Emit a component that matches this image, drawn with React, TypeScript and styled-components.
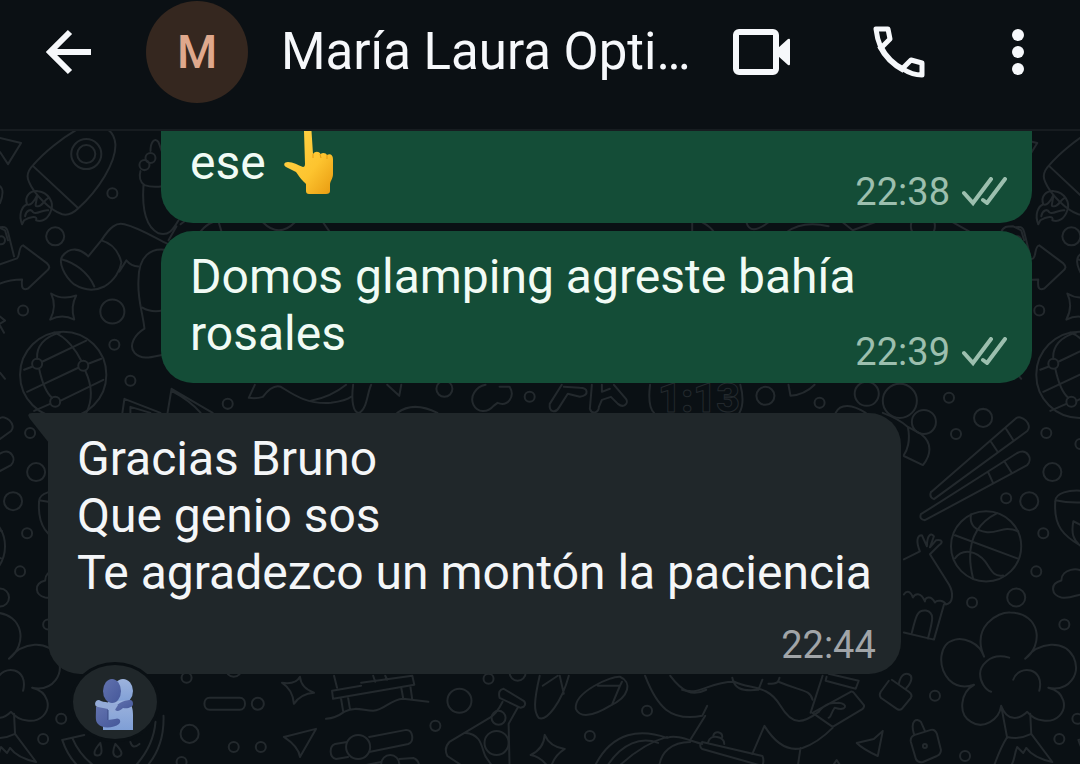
import React from "react";
import styled, { createGlobalStyle } from "styled-components";

const GlobalStyle = createGlobalStyle`
  * { box-sizing: border-box; }
  body {
    margin: 0;
    background: #0a1014;
    font-family: Roboto, "Liberation Sans", sans-serif;
  }
`;

const Screen = styled.div`
  display: flex;
  flex-direction: column;
  min-height: 100vh;
  overflow: hidden;
`;

const Header = styled.header`
  display: flex;
  align-items: center;
  padding: 0 50px 26px 44px;
  height: 131px;
  flex: none;
  background: #0b1014;
  border-bottom: 2px solid #171c20;
`;

const IconButton = styled.button`
  display: flex;
  flex: none;
  padding: 0;
  border: 0;
  background: none;
  color: #f6f8fb;
  cursor: pointer;
`;

const Avatar = styled.div`
  display: flex;
  align-items: center;
  justify-content: center;
  flex: none;
  width: 102px;
  height: 102px;
  margin-left: 54px;
  border-radius: 50%;
  background: #35271f;
  color: #dfa88c;
  font-size: 46px;
  font-weight: 500;
`;

const ContactName = styled.h1`
  flex: 1;
  min-width: 0;
  margin: 0 0 0 33px;
  overflow: hidden;
  white-space: nowrap;
  color: #f6f8fb;
  font-size: 51px;
  font-weight: 400;
  line-height: 60px;
`;

const Actions = styled.div`
  display: flex;
  align-items: center;
  gap: 80px;
`;

const Chat = styled.main`
  display: grid;
  flex: 1;
  grid-template-columns: minmax(0, 1fr);
`;

const Wallpaper = styled.svg`
  grid-area: 1 / 1;
  width: 100%;
  height: 0;
  min-height: 100%;
  fill: none;
  stroke: #23292d;
  stroke-width: 2;
  stroke-linecap: round;
  stroke-linejoin: round;
`;

const Messages = styled.section`
  grid-area: 1 / 1;
  z-index: 1;
  display: flex;
  flex-direction: column;
  align-items: flex-start;
  gap: 8px;
  padding: 0 48px 24px;
`;

const Bubble = styled.article<{ $sent?: boolean; $clipped?: boolean }>`
  position: relative;
  display: grid;
  width: ${(p) => (p.$sent ? "calc(100% - 113px)" : "auto")};
  align-self: ${(p) => (p.$sent ? "flex-end" : "flex-start")};
  margin-top: ${(p) => (p.$sent ? 0 : 22)}px;
  padding: ${(p) => (p.$clipped ? 0 : 17)}px 25px ${(p) => (p.$sent ? 9 : 7)}px 29px;
  border-radius: ${(p) => (p.$clipped ? "0 0 32px 32px" : p.$sent ? "32px" : "0 32px 32px 32px")};
  background: ${(p) => (p.$sent ? "#144d37" : "#20272a")};
  color: ${(p) => (p.$sent ? "#f1fbf5" : "#f4f6f8")};
`;

const MessageText = styled.p<{ $gap: number }>`
  grid-area: 1 / 1;
  display: flow-root;
  margin: 0;
  padding: 0 4px ${(p) => p.$gap}px 0;
  font-size: 48px;
  line-height: 57px;
`;

const EmojiLine = styled(MessageText)`
  display: flex;
  align-items: center;
  gap: 17px;
`;

const Meta = styled.footer<{ $sent?: boolean }>`
  grid-area: 1 / 1;
  display: flex;
  align-items: center;
  align-self: end;
  justify-self: end;
  gap: 12px;
  color: ${(p) => (p.$sent ? "#9cbfae" : "#a1a5a8")};
  font-size: 38px;
  line-height: 44px;
`;

const Tail = styled.svg`
  position: absolute;
  top: 0;
  left: -20px;
  fill: #20272a;
`;

const Reaction = styled.button`
  display: flex;
  align-items: center;
  justify-content: center;
  z-index: 1;
  width: 90px;
  height: 80px;
  margin: -20px 0 0 22px;
  padding: 6px 3px 0 0;
  border: 3px solid #0a1014;
  border-radius: 50%;
  background: #20272a;
  cursor: pointer;
`;

const circles: [number, number, number][] = [
  [86, 154, 15], [86, 154, 9], [112, 193, 5], [55, 236, 9], [23, 310, 5], [112, 311, 12],
  [114, 344, 5], [130, 380, 5], [30, 432, 5], [144, 165, 5], [150, 158, 5], [1, 240, 4],
  [63, 374, 43], [37, 363, 5], [83, 365, 5], [55, 401, 5], [897, 400, 17], [864, 393, 12],
  [921, 421, 12], [946, 397, 5], [980, 417, 9], [953, 433, 5], [1077, 443, 5], [1049, 471, 9],
  [1003, 497, 5], [1026, 500, 9], [1040, 532, 5], [1033, 570, 5], [1013, 596, 9], [969, 601, 5],
  [1061, 623, 5], [932, 694, 5], [1074, 717, 5], [1056, 737, 5], [962, 754, 5], [983, 545, 35],
  [922, 744, 2], [458, 699, 12], [487, 677, 5], [516, 671, 8], [434, 724, 5], [645, 709, 5],
  [588, 734, 5], [357, 745, 12], [389, 762, 9], [497, 716, 7], [495, 741, 12], [257, 702, 6],
  [186, 676, 5], [189, 732, 9], [233, 745, 5], [260, 745, 5], [181, 760, 5], [227, 403, 5],
  [443, 388, 8], [528, 396, 5], [763, 395, 9], [817, 402, 5], [920, 226, 12], [233, 667, 8],
];

const doodles = [
  // rocket
  "M76 130C62 138 44 152 33 165C28 170 26 176 29 182C34 194 50 210 62 214Q70 216 78 208C98 190 116 162 115 144Q114 134 108 130M33 166L78 208",
  "M22 224C18 214 22 206 27 204C24 196 30 190 38 191C48 192 54 202 51 210C48 219 42 222 36 220C38 215 30 216 24 220zM27 204C30 206 34 202 37 195C37 202 33 207 38 206C42 206 44 200 48 198M25 216C26 210 31 208 33 212C37 215 42 209 48 210",
  // hand and sleeve
  "M150 151C150 142 154 137 158 142L162 153M140 171C138 178 140 182 144 185C150 187 156 187 162 186M143 185C141 215 148 228 158 233C168 236 172 230 178 220M168 240L176 226M180 224L184 221",
  // arrow, card, plane
  "M0 264L17 258C20 256 18 246 23 245L47 263C50 266 50 268 46 271L28 288C23 290 21 288 22 279Q10 279 0 283M0 227C6 226 7 228 8 232L14 256M0 138L21 143L8 164L0 152M0 186Q5 190 0 203M0 316L5 320L0 323M0 325L4 332M0 372L5 378",
  // boot and leg
  "M101 240C110 226 116 222 124 224C140 228 155 238 168 244M101 240L88 256C80 248 70 246 62 256C58 262 64 276 74 284C84 290 94 291 104 286C114 280 120 270 121 262C118 250 112 243 101 240M62 259C74 262 88 272 94 286M119 271L126 260C130 265 134 266 138 266",
  "M168 250C150 246 138 256 138 280C137 300 142 310 144 328C134 334 128 345 134 352C142 360 152 356 162 354M142 307Q150 312 162 310",
  // sparkles
  "M51 293Q62 300 76 295Q70 306 74 319Q62 313 50 319Q57 306 51 293z",
  "M299 675Q300 686 313 691Q300 692 293 702Q292 688 281 681Q295 683 299 675z",
  "M543 733Q548 745 563 747Q552 754 549 766M543 733Q542 747 529 753Q540 755 547 766",
  // globe
  "M24 369L32 366M42 361L86 340M27 391L78 367M88 363L101 358M60 400L103 379M50 403L34 410M60 332C44 336 36 346 37 358M39 368C42 382 46 392 52 397M54 332C66 336 76 350 81 360M85 370C92 385 92 400 86 412",
  "M122 412L124 398L160 412M130 412L130 406L150 412M167 412L171 388L212 412M171 390Q190 400 200 412",
  // chopsticks
  "M928 491L1012 418C1018 412 1030 424 1024 430L931 498Q926 496 928 491M988 441L994 450M1003 428L1010 439",
  "M918 513L1014 452C1024 447 1030 458 1024 464L922 519Q916 518 918 513M985 471L990 482M1001 460L1008 471",
  "M880 412Q896 418 905 426C908 440 904 450 901 454M905 426L918 433C930 442 928 454 920 464L901 455",
  // basketball
  "M968 513C966 524 972 529 984 531C996 532 1000 524 1015 530M994 512C970 524 962 545 970 577M952 534L1014 557M952 557C960 546 974 550 982 560C988 568 990 576 1000 574",
  // bowl and cloud
  "M1082 490C1065 488 1052 492 1052 500C1050 525 1060 535 1080 546M1052 499Q1065 502 1082 501M1082 526L1070 520C1068 530 1068 540 1082 548",
  "M1082 594C1076 590 1070 598 1058 596C1048 594 1046 582 1058 579C1058 568 1075 564 1082 573",
  // hut
  "M901 558L917 550C913 540 914 534 919 534L924 545C924 534 928 531 931 535L927 546L933 539C940 538 940 541 936 544L927 553L946 583C951 592 950 602 943 603C941 599 934 598 932 601C928 593 922 596 922 600C918 590 912 592 910 596C907 588 903 590 901 593M941 603L931 638L901 631M909 631C913 615 914 608 923 609C932 611 930 618 925 637",
  // tree
  "M981 655C968 625 995 610 1007 611C1038 612 1040 644 1022 657M981 655C976 640 960 636 952 638C936 642 934 664 946 678C954 686 962 686 971 683C958 690 954 712 968 720C980 728 996 718 998 704M1006 656C985 650 977 666 977 672C977 680 982 688 988 690M1010 678C1016 662 1042 666 1036 689M1022 657C1036 640 1060 638 1070 655C1078 672 1066 690 1045 686C1062 690 1064 706 1056 714C1048 722 1032 720 1024 710C1016 718 1004 720 998 704L1004 736M1027 712L1028 732Q1016 738 1004 735C996 748 994 756 990 766M1028 732L1049 760Q1030 756 1023 746L1020 751L1014 745C1010 755 1012 760 1006 766",
  // padlocks
  "M889 678L906 690Q910 693 908 696L899 707Q897 709 894 707L878 696Q876 693 878 690L886 679M896 682C898 672 904 670 908 674C910 678 906 684 903 687",
  "M912 733L928 728Q932 727 934 732L938 748Q938 752 934 754L920 760Q915 761 913 757L908 740Q907 735 912 733M911 732C907 718 914 716 918 720L922 729",
  "M854 741L871 737L880 729L875 754Q860 747 854 741",
  // figure with a phone
  "M810 711L848 690Q850 689 852 692L861 703Q862 705 860 707L830 725zM816 710C826 698 832 702 836 701C846 702 844 710 832 706C828 712 828 716 826 716M808 711L820 674M824 675L823 679L853 687L856 679L826 672",
  "M680 688C700 694 705 680 732 680C748 688 765 682 778 704C790 724 800 722 816 710M730 676C732 686 738 690 756 688L760 678M766 682C776 682 776 680 777 676M776 680C800 690 808 688 810 698M750 752L762 724C772 740 785 750 800 746C812 742 820 736 830 726M798 746L795 766",
  "M700 740L760 754Q762 758 760 764M700 740Q696 744 700 747L760 764M706 740C708 732 722 734 722 742M711 734C712 728 720 730 720 735M830 764L834 758L838 764",
  "M643 674C655 705 668 720 700 714L705 704M703 714L688 738M668 674C680 690 690 695 704 688",
  // bridge
  "M360 681L411 674L413 683L332 697L331 689L360 684M333 674L336 686M372 674L374 680M384 674L386 678M400 686L402 697M409 684L411 698M340 697L342 709M347 696L349 708M325 717Q335 716 343 710C355 704 362 709 372 709C384 708 388 698 402 697L427 700",
  // sliders
  "M368 735L405 728C412 728 413 740 407 742L368 750M346 740L334 742C328 744 328 756 335 757L347 755M398 757L412 756Q418 758 418 766M360 764L380 760",
  // flask
  "M502 687L522 699Q525 702 522 705L519 706L498 696Q496 688 502 687M501 700C495 712 490 715 488 716L448 740Q442 746 446 754L464 766M516 706L507 722L508 766M464 731C482 732 480 750 485 756L492 766",
  // sandals
  "M538 674C532 700 532 710 537 716C545 720 560 700 567 674M541 684L556 674M558 674L562 692M574 707C572 690 610 674 618 675C630 680 628 695 608 704C590 715 578 716 574 707M596 684L618 684L610 703M618 684L620 680",
  "M592 766C610 728 640 727 665 736C675 732 690 740 700 742M604 766C620 740 640 735 656 741M615 766Q640 742 665 735M657 766C658 750 670 740 688 740",
  "M209 696H239C246 696 246 708 239 708H209C202 708 202 696 209 696M283 735L315 727L299 755Q298 745 283 735",
  // watermelon
  "M62 738L84 733M62 738Q68 756 80 766M72 736Q80 755 97 766M163 714Q164 745 145 766M155 720Q153 745 133 766M100 741Q92 750 95 753Q104 756 100 741M115 742Q110 754 117 755Q126 753 115 742M130 740Q132 748 139 742",
  // whale and cloud
  "M254 384L248 397Q256 398 262 396C268 388 274 384 280 386C290 392 305 404 330 402Q345 400 350 396M310 400Q330 396 345 384M352 384C350 400 352 412 358 412C366 408 366 392 370 384M386 384L398 395L400 384M484 384C474 386 468 396 472 404C476 412 486 412 492 405L496 402C506 406 514 396 508 386L498 386M396 412Q412 400 436 412",
  "M786 384L788 395Q802 394 812 384M648 384C646 400 648 408 652 412M738 384C741 395 741 405 737 412M833 412C838 402 850 404 863 412",
  // details between the bubbles
  "M200 231Q206 224 212 222M218 222L221 232M262 222Q278 238 294 222M322 222L329 232M690 222V232M700 222Q708 226 712 232M744 222Q748 236 766 222M784 232Q800 220 826 226M840 222L850 230L872 222M950 222L966 231M998 232C1000 226 1004 226 1010 226L1018 230L1021 240",
];

function ChatWallpaper() {
  return (
    <Wallpaper viewBox="0 131 1080 633" preserveAspectRatio="xMinYMin slice" aria-hidden="true">
      <defs>
        <g id="tile">
          {circles.map(([cx, cy, r], i) => (
            <circle key={i} cx={cx} cy={cy} r={r} />
          ))}
          {doodles.map((d, i) => (
            <path key={i} d={d} />
          ))}
          <path d="M560 384L548 403C547 412 554 412 557 407L566 393L578 396C588 394 586 387 578 387L562 386" />
          <path d="M590 384L588 408C590 414 597 412 597 406L600 399L609 396L616 403C622 408 627 402 624 398L612 384M600 384V391L608 388" />
          <text x="656" y="411" fontSize="40" fontWeight="900" strokeWidth="1">1:13</text>
        </g>
      </defs>
      <use href="#tile" x="-1013" />
      <use href="#tile" />
      <use href="#tile" x="1013" />
    </Wallpaper>
  );
}

function ReadTicks() {
  return (
    <svg width="45" height="30" viewBox="0 0 45 30" fill="none" stroke="currentColor" strokeWidth="4" role="img" aria-label="Entregado">
      <path d="M2 16L11 26L29 2" strokeLinecap="round" />
      <path d="M21 23L25 26L43 2" strokeLinecap="round" strokeLinejoin="round" />
    </svg>
  );
}

function PointingUp() {
  return (
    <svg width="52" height="63" viewBox="0 0 52 63" role="img" aria-label="Dedo hacia arriba">
      <defs>
        <linearGradient id="skin" x1="0" y1="0" x2="1" y2="1">
          <stop offset="0" stopColor="#ffd54a" />
          <stop offset="0.6" stopColor="#fdc42f" />
          <stop offset="1" stopColor="#e89a10" />
        </linearGradient>
      </defs>
      <path
        d="M21 0H28.500L30 23C32 20 36 20 37.500 23C40 21 43 22 44 24C47 22 50 24 50 28V43C50 48 47 50 47 54V60Q47 63 43 63H26Q23 63 23 60V53C20 50 17 47 13 41L3 36C0 34 1 31 5 31C10 31 15 34 20 36Q22 36 22 33z"
        fill="url(#skin)"
      />
      <path d="M30 23V27M37 23L38 27M44 24V28" fill="none" stroke="#e59a12" strokeWidth="1" />
    </svg>
  );
}

function Hug() {
  return (
    <svg width="40" height="52" viewBox="0 0 40 52" role="img" aria-label="Abrazo">
      <defs>
        <linearGradient id="light" x1="0" y1="0" x2="0" y2="1">
          <stop offset="0" stopColor="#9db3dd" />
          <stop offset="1" stopColor="#7f9fd6" />
        </linearGradient>
        <linearGradient id="dark" x1="0" y1="0" x2="1" y2="1">
          <stop offset="0" stopColor="#6272ae" />
          <stop offset="1" stopColor="#45589a" />
        </linearGradient>
      </defs>
      <ellipse cx="29" cy="12" rx="10" ry="12" fill="url(#light)" />
      <path d="M14 23L34 21C38 26 39 30 39 36V51H9V46L14 34z" fill="url(#light)" />
      <path d="M2 28C2 38 1 42 4 45C8 50 20 49 25 45C28 42 25 38 21 40L14 41V28z" fill="url(#dark)" />
      <ellipse cx="18" cy="12" rx="9" ry="12" fill="url(#dark)" />
      <path d="M36 21C30 21 20 26 21 30C22 34 27 31 29 29C34 30 39 28 39 25Q39 21 36 21z" fill="url(#dark)" />
      <path d="M5 21C0 21 0 28 4 28L14 30L19 34L24 26C18 23 10 24 5 21z" fill="#94abd8" />
      <path d="M14 31V41" stroke="#394a83" strokeWidth="1" />
    </svg>
  );
}

export default function App() {
  return (
    <Screen>
      <GlobalStyle />
      <Header>
        <IconButton aria-label="Atrás">
          <svg width="48" height="48" viewBox="0 0 48 48" fill="none" stroke="currentColor" strokeWidth="6">
            <path d="M26 4L6 24L26 44M6 24H47" />
          </svg>
        </IconButton>
        <Avatar>M</Avatar>
        <ContactName>María Laura Opti…</ContactName>
        <Actions>
          <IconButton aria-label="Videollamada">
            <svg width="60" height="48" viewBox="0 0 60 48" fill="none">
              <rect x="4" y="4" width="40" height="40" rx="3" stroke="currentColor" strokeWidth="6" />
              <path d="M46 20L56 11Q58 10 58 12V36Q58 38 56 37L46 28z" fill="currentColor" />
            </svg>
          </IconButton>
          <IconButton aria-label="Llamar">
            <svg width="54" height="54" viewBox="0 0 54 54" fill="none" stroke="currentColor" strokeWidth="5" strokeLinejoin="round">
              <path d="M4 4H16L18 14L9 23Q5 14 4 4z" />
              <path d="M31 43L39 35L50 38V50Q40 50 31 44z" />
              <path d="M8 21Q16 37 32 45" strokeWidth="6" />
            </svg>
          </IconButton>
          <IconButton aria-label="Más opciones">
            <svg width="24" height="48" viewBox="0 0 24 48" fill="currentColor">
              <circle cx="12" cy="7" r="6" />
              <circle cx="12" cy="24" r="6" />
              <circle cx="12" cy="41" r="6" />
            </svg>
          </IconButton>
        </Actions>
      </Header>
      <Chat>
        <ChatWallpaper />
        <Messages>
          <Bubble $sent $clipped>
            <EmojiLine $gap={20}>
              ese <PointingUp />
            </EmojiLine>
            <Meta $sent>
              <time>22:38</time>
              <ReadTicks />
            </Meta>
          </Bubble>
          <Bubble $sent>
            <MessageText $gap={12}>Domos glamping agreste bahía rosales</MessageText>
            <Meta $sent>
              <time>22:39</time>
              <ReadTicks />
            </Meta>
          </Bubble>
          <Bubble>
            <Tail width="21" height="30" viewBox="0 0 21 30">
              <path d="M21 0H4Q-2 0 2 6L21 30z" />
            </Tail>
            <MessageText $gap={66}>
              Gracias Bruno
              <br />
              Que genio sos
              <br />
              Te agradezco un montón la paciencia
            </MessageText>
            <Meta>
              <time>22:44</time>
            </Meta>
          </Bubble>
          <Reaction aria-label="Reacción: abrazo">
            <Hug />
          </Reaction>
        </Messages>
      </Chat>
    </Screen>
  );
}
